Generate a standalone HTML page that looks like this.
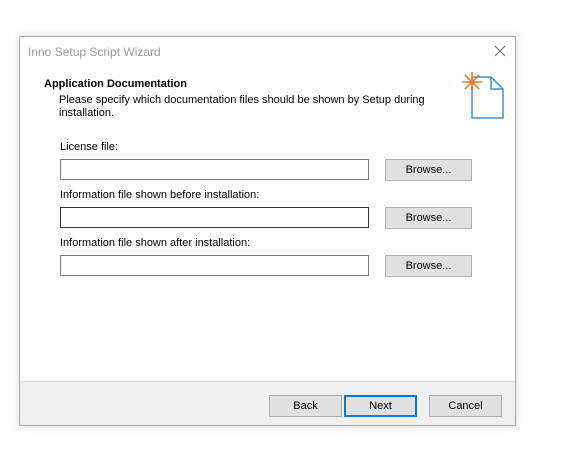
<!DOCTYPE html>
<html><head><style>
*{margin:0;padding:0;box-sizing:border-box}
body{width:561px;height:456px;background:#fff;font-family:"Liberation Sans",sans-serif;font-size:11px;color:#000;position:relative;overflow:hidden}
.win{position:absolute;left:19px;top:36px;width:497px;height:390px;border:1px solid #aaa;background:#fff;box-shadow:0 0 8px rgba(0,0,0,.15)}
.a{position:absolute;white-space:nowrap}
.edit{position:absolute;left:40px;width:309px;height:21px;border:1px solid #7a7a7a;background:#fff}
.btn{position:absolute;height:22px;border:1px solid #adadad;background:#e1e1e1;text-align:center;line-height:20px}
.foot{position:absolute;left:0;top:344px;width:495px;height:44px;background:#f0f0f0;border-top:1px solid #dfdfdf}
</style></head><body>
<div class="win">
<div class="a" style="left:8px;top:8px;font-size:12px;color:#999">Inno Setup Script Wizard</div>
<svg class="a" style="left:474px;top:8px" width="12" height="12" viewBox="0 0 12 12"><path d="M1 1L11 11M11 1L1 11" stroke="#666" stroke-width="1"/></svg>
<div class="a" style="left:24px;top:41px;font-weight:bold">Application Documentation</div>
<div class="a" style="left:39px;top:57px;line-height:13px">Please specify which documentation files should be shown by Setup during<br>installation.</div>
<svg class="a" style="left:440px;top:34px" width="46" height="50" viewBox="0 0 46 50">
<path d="M12 6 H31 L43 18 V47 H12 Z" fill="#fff" stroke="#3a8fd6" stroke-width="1.5"/>
<path d="M31 6 V18 H43" fill="none" stroke="#3a8fd6" stroke-width="1.5"/>
<g stroke="#f07a28" stroke-width="1.6"><line x1="12" y1="1" x2="12" y2="21"/><line x1="2" y1="11" x2="22" y2="11"/><line x1="5" y1="4" x2="19" y2="18"/><line x1="19" y1="4" x2="5" y2="18"/></g>
</svg>
<div class="a" style="left:40px;top:104px">License file:</div>
<div class="edit" style="top:122px"></div>
<div class="btn" style="left:365px;top:122px;width:87px">Browse...</div>
<div class="a" style="left:40px;top:152px">Information file shown before installation:</div>
<div class="edit" style="top:170px;border-color:#333"></div>
<div class="btn" style="left:365px;top:170px;width:87px">Browse...</div>
<div class="a" style="left:40px;top:200px">Information file shown after installation:</div>
<div class="edit" style="top:218px"></div>
<div class="btn" style="left:365px;top:218px;width:87px">Browse...</div>
<div class="foot">
<div class="btn" style="left:249px;top:13px;width:73px">Back</div>
<div class="btn" style="left:324px;top:13px;width:73px;border:2px solid #0078d7;line-height:18px">Next</div>
<div class="btn" style="left:409px;top:13px;width:73px">Cancel</div>
</div>
</div>
</body></html>
